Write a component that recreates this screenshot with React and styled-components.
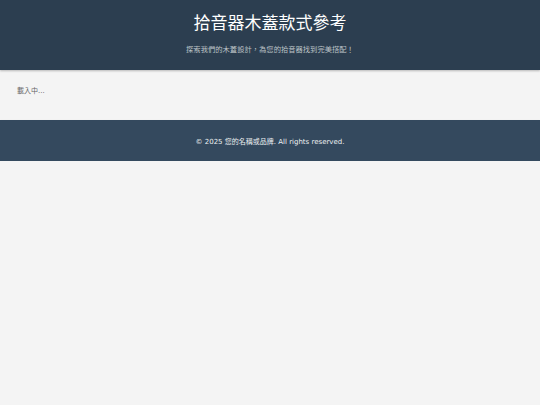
import React from 'react';
import styled, { createGlobalStyle } from 'styled-components';

const GlobalStyle = createGlobalStyle`
  html, body {
    margin: 0;
    padding: 0;
    background: #f4f4f4;
    font-family: "DejaVu Sans", "Noto Sans CJK TC", sans-serif;
    color: #333;
  }
`;

function App() {
  return (
    <>
      <GlobalStyle />
      <Header>
        <Title>拾音器木蓋款式參考</Title>
        <Subtitle>探索我們的木蓋設計，為您的拾音器找到完美搭配！</Subtitle>
      </Header>
      <Main>
        <Loading>載入中...</Loading>
      </Main>
      <Footer>
        <p>© 2025 您的名稱或品牌. All rights reserved.</p>
      </Footer>
    </>
  );
}
export default App;

const Header = styled.header`
  background: #2c3e50;
  color: #fff;
  text-align: center;
  height: 70px;
  box-sizing: border-box;
  padding-top: 12px;
  box-shadow: 0 1px 2px rgba(0, 0, 0, 0.25);
  position: relative;
`;

const Title = styled.h1`
  margin: 0;
  font-size: 17px;
  font-weight: 400;
  line-height: 20px;
  font-family: "Noto Sans CJK TC", sans-serif;
`;

const Subtitle = styled.p`
  margin: 12px 0 0;
  font-size: 7.3px;
  line-height: 10px;
  color: #bdc3c7;
  font-family: "Noto Sans CJK TC", sans-serif;
`;

const Main = styled.main`
  height: 50px;
  box-sizing: border-box;
  padding: 17px 17px;
`;

const Loading = styled.p`
  margin: 0;
  font-size: 7px;
  line-height: 9px;
  color: #666;
`;

const Footer = styled.footer`
  background: #34495e;
  color: #ecf0f1;
  text-align: center;
  height: 41px;
  box-sizing: border-box;
  padding-top: 2px;
  display: flex;
  align-items: center;
  justify-content: center;
  box-shadow: 0 1px 2px rgba(0, 0, 0, 0.15);

  p {
    margin: 0;
    font-size: 7px;
    line-height: 10px;
  }
`;
